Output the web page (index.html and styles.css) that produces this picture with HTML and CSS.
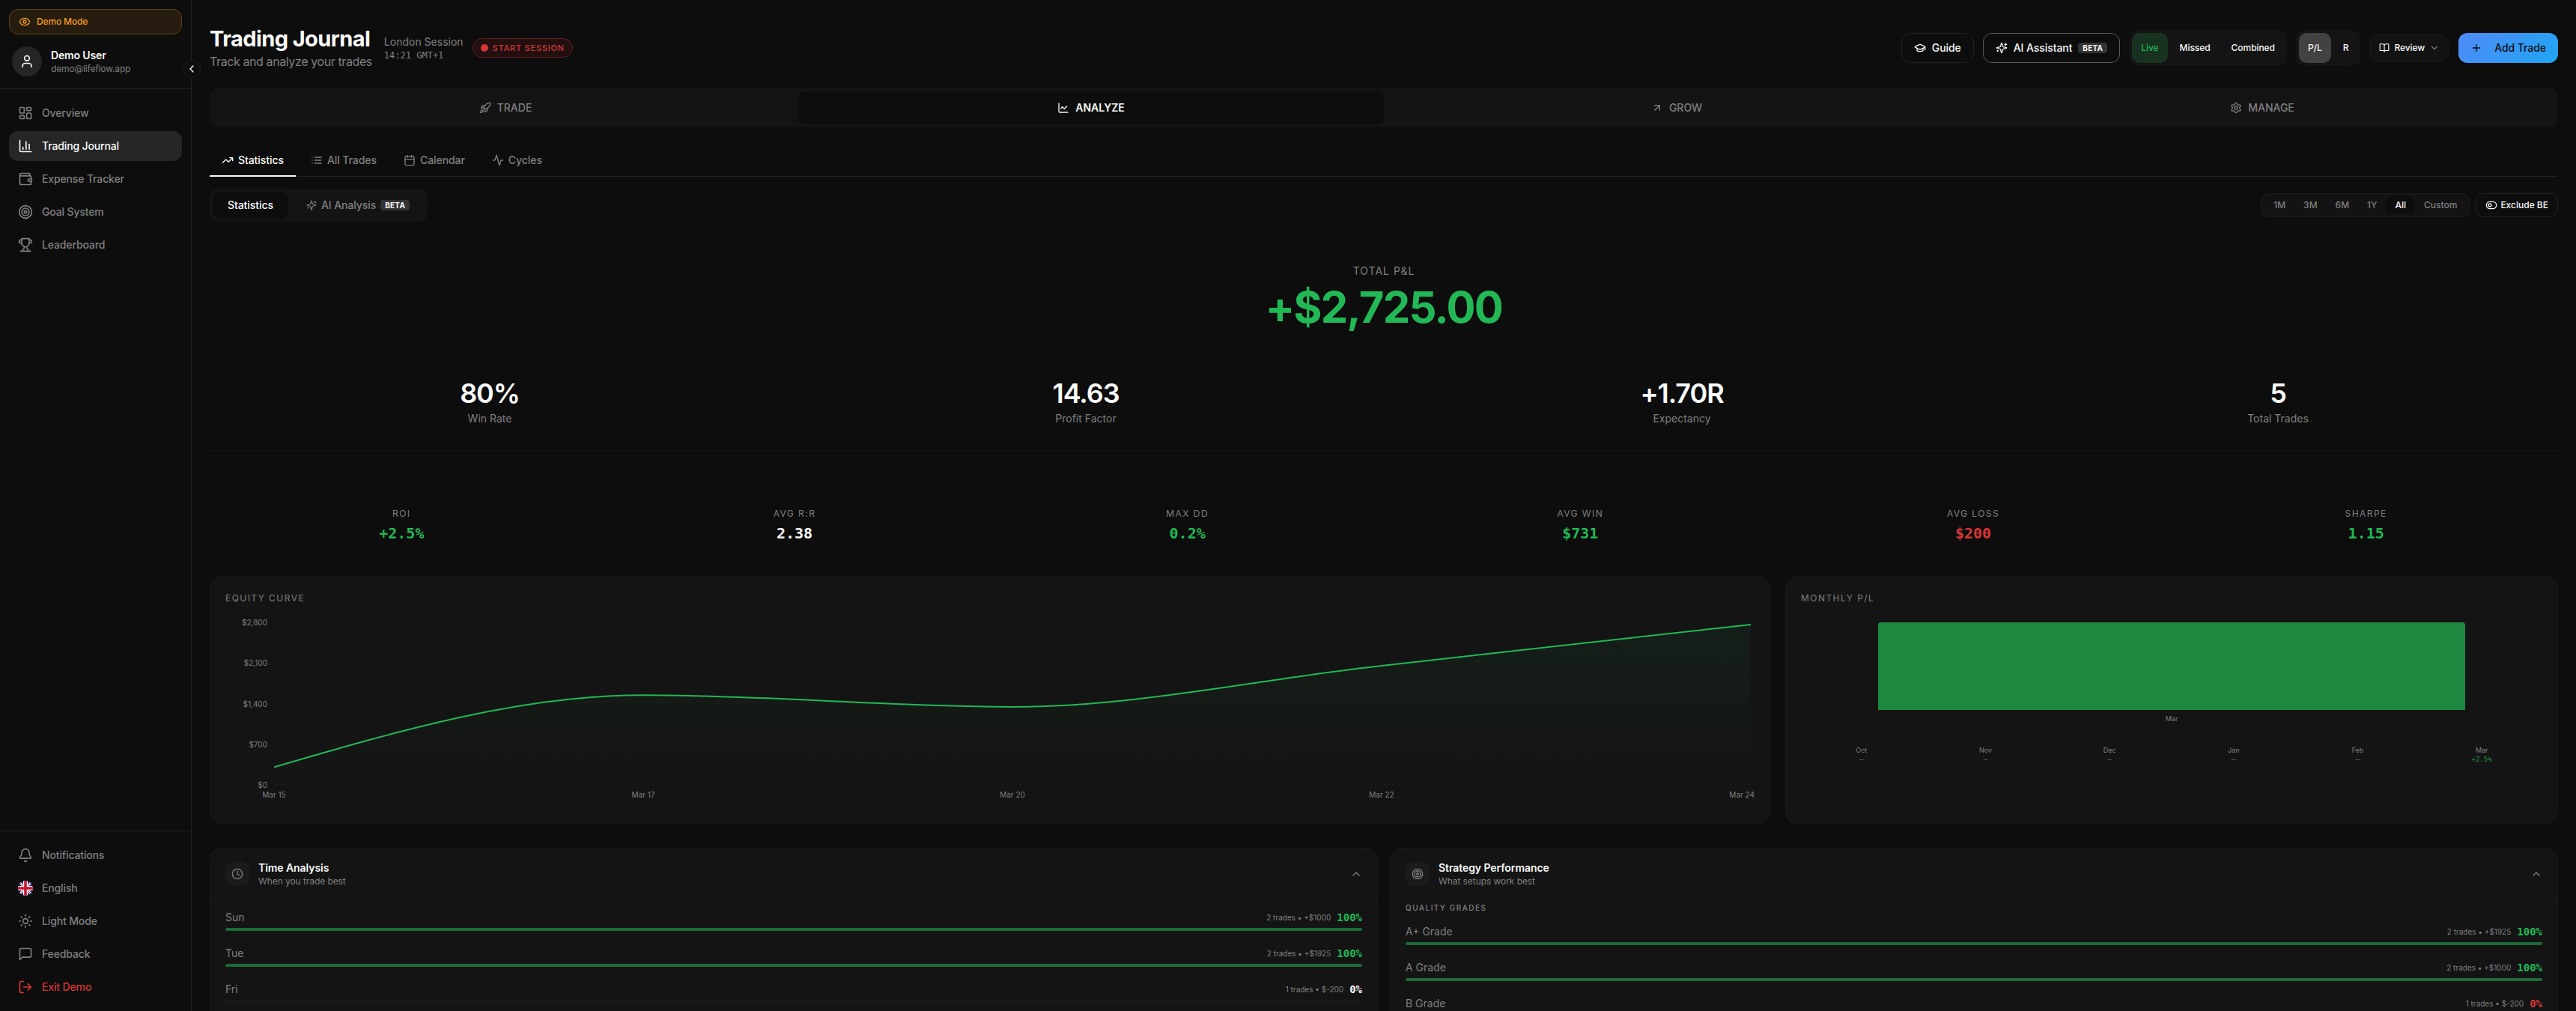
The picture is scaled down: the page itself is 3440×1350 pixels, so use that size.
FILE: index.html
```html
<!DOCTYPE html>
<html lang="en">
<head>
	<meta charset="UTF-8">
	<title>Trading Journal</title>
	<meta name="viewport" content="width=device-width,initial-scale=1">
	<link rel="stylesheet" href="styles.css">
</head>
<body>
	<svg class="sprite" aria-hidden="true">
		<symbol id="eye" viewBox="0 0 24 24"><path d="M2.062 12.348a1 1 0 0 1 0-.696 10.75 10.75 0 0 1 19.876 0 1 1 0 0 1 0 .696 10.75 10.75 0 0 1-19.876 0"/><circle cx="12" cy="12" r="3"/></symbol>
		<symbol id="user" viewBox="0 0 24 24"><path d="M19 21v-2a4 4 0 0 0-4-4H9a4 4 0 0 0-4 4v2"/><circle cx="12" cy="7" r="4"/></symbol>
		<symbol id="dashboard" viewBox="0 0 24 24"><rect width="7" height="9" x="3" y="3" rx="1"/><rect width="7" height="5" x="14" y="3" rx="1"/><rect width="7" height="9" x="14" y="12" rx="1"/><rect width="7" height="5" x="3" y="16" rx="1"/></symbol>
		<symbol id="columns" viewBox="0 0 24 24"><path d="M3 3v16a2 2 0 0 0 2 2h16M18 17V9M13 17V5M8 17v-3"/></symbol>
		<symbol id="wallet" viewBox="0 0 24 24"><path d="M19 7V4a1 1 0 0 0-1-1H5a2 2 0 0 0 0 4h15a1 1 0 0 1 1 1v4h-3a2 2 0 0 0 0 4h3a1 1 0 0 0 1-1v-2a1 1 0 0 0-1-1"/><path d="M3 5v14a2 2 0 0 0 2 2h15a1 1 0 0 0 1-1v-4"/></symbol>
		<symbol id="target" viewBox="0 0 24 24"><circle cx="12" cy="12" r="10"/><circle cx="12" cy="12" r="6"/><circle cx="12" cy="12" r="2"/></symbol>
		<symbol id="trophy" viewBox="0 0 24 24"><path d="M6 9H4.5a2.5 2.5 0 0 1 0-5H6M18 9h1.5a2.5 2.5 0 0 0 0-5H18M4 22h16M10 14.66V17c0 .55-.47.98-.97 1.21C7.85 18.75 7 20.24 7 22M14 14.66V17c0 .55.47.98.97 1.21C16.15 18.75 17 20.24 17 22M18 2H6v7a6 6 0 0 0 12 0V2Z"/></symbol>
		<symbol id="bell" viewBox="0 0 24 24"><path d="M10.268 21a2 2 0 0 0 3.464 0M3.262 15.326A1 1 0 0 0 4 17h16a1 1 0 0 0 .74-1.673C19.41 13.956 18 12.499 18 8A6 6 0 0 0 6 8c0 4.499-1.411 5.956-2.738 7.326"/></symbol>
		<symbol id="sun" viewBox="0 0 24 24"><circle cx="12" cy="12" r="4"/><path d="M12 2v2M12 20v2M4.93 4.93l1.41 1.41M17.66 17.66l1.41 1.41M2 12h2M20 12h2M6.34 17.66l-1.41 1.41M19.07 4.93l-1.41 1.41"/></symbol>
		<symbol id="message" viewBox="0 0 24 24"><path d="M21 15a2 2 0 0 1-2 2H7l-4 4V5a2 2 0 0 1 2-2h14a2 2 0 0 1 2 2z"/></symbol>
		<symbol id="logout" viewBox="0 0 24 24"><path d="m16 17 5-5-5-5M21 12H9M9 21H5a2 2 0 0 1-2-2V5a2 2 0 0 1 2-2h4"/></symbol>
		<symbol id="left" viewBox="0 0 24 24"><path d="m15 18-6-6 6-6"/></symbol>
		<symbol id="up" viewBox="0 0 24 24"><path d="m18 15-6-6-6 6"/></symbol>
		<symbol id="down" viewBox="0 0 24 24"><path d="m6 9 6 6 6-6"/></symbol>
		<symbol id="rocket" viewBox="0 0 24 24"><path d="M4.5 16.5c-1.5 1.26-2 5-2 5s3.74-.5 5-2c.71-.84.7-2.13-.09-2.91a2.18 2.18 0 0 0-2.91-.09zM12 15l-3-3a22 22 0 0 1 2-3.95A12.88 12.88 0 0 1 22 2c0 2.72-.78 7.5-6 11a22.35 22.35 0 0 1-4 2z"/><path d="M9 12H4s.55-3.03 2-4c1.62-1.08 5 0 5 0M12 15v5s3.03-.55 4-2c1.08-1.62 0-5 0-5"/></symbol>
		<symbol id="line" viewBox="0 0 24 24"><path d="M3 3v16a2 2 0 0 0 2 2h16M19 9l-5 5-4-4-3 3"/></symbol>
		<symbol id="arrow" viewBox="0 0 24 24"><path d="M7 7h10v10M7 17 17 7"/></symbol>
		<symbol id="gear" viewBox="0 0 24 24"><path d="M9.671 4.136a2.34 2.34 0 0 1 4.659 0 2.34 2.34 0 0 0 3.319 1.915 2.34 2.34 0 0 1 2.33 4.033 2.34 2.34 0 0 0 0 3.831 2.34 2.34 0 0 1-2.33 4.033 2.34 2.34 0 0 0-3.319 1.915 2.34 2.34 0 0 1-4.659 0 2.34 2.34 0 0 0-3.32-1.915 2.34 2.34 0 0 1-2.33-4.033 2.34 2.34 0 0 0 0-3.831A2.34 2.34 0 0 1 6.35 6.051a2.34 2.34 0 0 0 3.319-1.915"/><circle cx="12" cy="12" r="3"/></symbol>
		<symbol id="trend" viewBox="0 0 24 24"><path d="M16 7h6v6M22 7l-8.500 8.500-5-5L2 17"/></symbol>
		<symbol id="list" viewBox="0 0 24 24"><path d="M3 12h.01M3 18h.01M3 6h.01M8 12h13M8 18h13M8 6h13"/></symbol>
		<symbol id="calendar" viewBox="0 0 24 24"><path d="M8 2v4M16 2v4M3 10h18"/><rect width="18" height="18" x="3" y="4" rx="2"/></symbol>
		<symbol id="activity" viewBox="0 0 24 24"><path d="M22 12h-2.480a2 2 0 0 0-1.930 1.460l-2.350 8.360a.25.25 0 0 1-.48 0L9.240 2.180a.25.25 0 0 0-.48 0l-2.350 8.360A2 2 0 0 1 4.490 12H2"/></symbol>
		<symbol id="sparkles" viewBox="0 0 24 24"><path d="M9.937 15.5A2 2 0 0 0 8.5 14.063l-6.135-1.582a.5.5 0 0 1 0-.962L8.500 9.936A2 2 0 0 0 9.937 8.500l1.582-6.135a.5.5 0 0 1 .963 0L14.063 8.500A2 2 0 0 0 15.500 9.937l6.135 1.581a.5.5 0 0 1 0 .964L15.500 14.063a2 2 0 0 0-1.437 1.437l-1.582 6.135a.5.5 0 0 1-.963 0zM20 3v4M22 5h-4M4 17v2M5 18H3"/></symbol>
		<symbol id="cap" viewBox="0 0 24 24"><path d="M21.420 10.922a1 1 0 0 0-.019-1.838L12.830 5.180a2 2 0 0 0-1.660 0L2.600 9.080a1 1 0 0 0 0 1.832l8.570 3.908a2 2 0 0 0 1.660 0zM22 10v6M6 12.500V16a6 3 0 0 0 12 0v-3.500"/></symbol>
		<symbol id="book" viewBox="0 0 24 24"><path d="M12 7v14M3 18a1 1 0 0 1-1-1V4a1 1 0 0 1 1-1h5a4 4 0 0 1 4 4 4 4 0 0 1 4-4h5a1 1 0 0 1 1 1v13a1 1 0 0 1-1 1h-6a3 3 0 0 0-3 3 3 3 0 0 0-3-3z"/></symbol>
		<symbol id="plus" viewBox="0 0 24 24"><path d="M5 12h14M12 5v14"/></symbol>
		<symbol id="toggle" viewBox="0 0 24 24"><rect width="20" height="14" x="2" y="5" rx="7"/><circle cx="9" cy="12" r="3"/></symbol>
		<symbol id="clock" viewBox="0 0 24 24"><circle cx="12" cy="12" r="10"/><path d="M12 6v6l4 2"/></symbol>
	</svg>

	<div class="app">
		<aside class="sidebar">
			<div class="side-top">
				<div class="demo"><svg class="icon"><use href="#eye"/></svg>Demo Mode</div>
				<div class="user">
					<span class="avatar"><svg class="icon icon-lg"><use href="#user"/></svg></span>
					<div>
						<p class="user-name">Demo User</p>
						<p class="user-mail">demo@lifeflow.app</p>
					</div>
				</div>
				<button class="collapse" aria-label="Collapse sidebar"><svg class="icon"><use href="#left"/></svg></button>
			</div>
			<nav class="side-nav">
				<a href="#"><svg class="icon icon-lg"><use href="#dashboard"/></svg>Overview</a>
				<a href="#" class="active"><svg class="icon icon-lg"><use href="#columns"/></svg>Trading Journal</a>
				<a href="#"><svg class="icon icon-lg"><use href="#wallet"/></svg>Expense Tracker</a>
				<a href="#"><svg class="icon icon-lg"><use href="#target"/></svg>Goal System</a>
				<a href="#"><svg class="icon icon-lg"><use href="#trophy"/></svg>Leaderboard</a>
			</nav>
			<nav class="side-nav side-bottom">
				<a href="#"><svg class="icon icon-lg"><use href="#bell"/></svg>Notifications</a>
				<a href="#">
					<svg class="flag" viewBox="0 0 20 20">
						<clipPath id="round"><circle cx="10" cy="10" r="10"/></clipPath>
						<g clip-path="url(#round)">
							<rect width="20" height="20" fill="#012169"/>
							<path d="M0 0l20 20M20 0L0 20" stroke="#fff" stroke-width="3"/>
							<path d="M0 0l20 20M20 0L0 20" stroke="#c8102e" stroke-width="1"/>
							<path d="M10 0v20M0 10h20" stroke="#fff" stroke-width="6"/>
							<path d="M10 0v20M0 10h20" stroke="#c8102e" stroke-width="3.500"/>
						</g>
					</svg>English</a>
				<a href="#"><svg class="icon icon-lg"><use href="#sun"/></svg>Light Mode</a>
				<a href="#"><svg class="icon icon-lg"><use href="#message"/></svg>Feedback</a>
				<a href="#" class="exit"><svg class="icon icon-lg"><use href="#logout"/></svg>Exit Demo</a>
			</nav>
		</aside>

		<main class="main">
			<header class="header">
				<div>
					<h1>Trading Journal</h1>
					<p class="subtitle">Track and analyze your trades</p>
				</div>
				<div class="session">
					<div>
						<p class="session-name">London Session</p>
						<p class="session-time">14:21 GMT+1</p>
					</div>
					<button class="start"><i></i>START SESSION</button>
				</div>
				<div class="actions">
					<button class="btn"><svg class="icon"><use href="#cap"/></svg>Guide</button>
					<button class="btn btn-ai"><svg class="icon"><use href="#sparkles"/></svg>AI Assistant<span class="beta">BETA</span></button>
					<div class="switch">
						<button class="live">Live</button>
						<button>Missed</button>
						<button>Combined</button>
					</div>
					<div class="switch">
						<button class="active">P/L</button>
						<button>R</button>
					</div>
					<button class="review"><svg class="icon icon-sm"><use href="#book"/></svg>Review<svg class="icon icon-sm dim"><use href="#down"/></svg></button>
					<button class="add"><svg class="icon"><use href="#plus"/></svg>Add Trade</button>
				</div>
			</header>

			<nav class="modes">
				<button><svg class="icon"><use href="#rocket"/></svg>TRADE</button>
				<button class="active"><svg class="icon"><use href="#line"/></svg>ANALYZE</button>
				<button><svg class="icon"><use href="#arrow"/></svg>GROW</button>
				<button><svg class="icon"><use href="#gear"/></svg>MANAGE</button>
			</nav>

			<nav class="tabs">
				<button class="active"><svg class="icon"><use href="#trend"/></svg>Statistics</button>
				<button><svg class="icon"><use href="#list"/></svg>All Trades</button>
				<button><svg class="icon"><use href="#calendar"/></svg>Calendar</button>
				<button><svg class="icon"><use href="#activity"/></svg>Cycles</button>
			</nav>

			<div class="toolbar">
				<div class="segment">
					<button class="active">Statistics</button>
					<button><svg class="icon icon-sm"><use href="#sparkles"/></svg>AI Analysis<span class="beta">BETA</span></button>
				</div>
				<div class="filters">
					<div class="range">
						<button>1M</button>
						<button>3M</button>
						<button>6M</button>
						<button>1Y</button>
						<button class="active">All</button>
						<button>Custom</button>
					</div>
					<button class="exclude"><svg class="icon"><use href="#toggle"/></svg>Exclude BE</button>
				</div>
			</div>

			<section class="hero">
				<p class="hero-label">TOTAL P&amp;L</p>
				<p class="hero-value">+$2,725.00</p>
			</section>

			<section class="stats">
				<div><p class="stat-value">80%</p><p class="stat-label">Win Rate</p></div>
				<div><p class="stat-value">14.63</p><p class="stat-label">Profit Factor</p></div>
				<div><p class="stat-value">+1.70R</p><p class="stat-label">Expectancy</p></div>
				<div><p class="stat-value">5</p><p class="stat-label">Total Trades</p></div>
			</section>

			<section class="metrics">
				<div><p class="caps">ROI</p><p class="metric green">+2.5%</p></div>
				<div><p class="caps">AVG R:R</p><p class="metric">2.38</p></div>
				<div><p class="caps">MAX DD</p><p class="metric green">0.2%</p></div>
				<div><p class="caps">AVG WIN</p><p class="metric green">$731</p></div>
				<div><p class="caps">AVG LOSS</p><p class="metric red">$200</p></div>
				<div><p class="caps">SHARPE</p><p class="metric green">1.15</p></div>
			</section>

			<section class="charts">
				<div class="card equity">
					<h2 class="caps">EQUITY CURVE</h2>
					<div class="chart">
						<div class="y-axis"><span>$2,800</span><span>$2,100</span><span>$1,400</span><span>$700</span><span>$0</span></div>
						<svg class="plot" viewBox="0 0 1970 220" preserveAspectRatio="none">
							<defs>
								<linearGradient id="fade" x1="0" y1="0" x2="0" y2="1">
									<stop offset="0" stop-color="#22c55e" stop-opacity=".06"/>
									<stop offset="1" stop-color="#22c55e" stop-opacity="0"/>
								</linearGradient>
							</defs>
							<path class="grid" d="M0 .5H1970M0 55H1970M0 110H1970M0 165H1970M0 219.500H1970"/>
							<path fill="url(#fade)" d="M0 196.400C164.200 148.300 328.300 100.200 492.500 100.200C656.700 100.200 820.800 115.900 985 115.900C1149.200 115.900 1313.300 79.200 1477.500 60.900L1970 5.900V220H0Z"/>
							<path class="curve" d="M0 196.400C164.200 148.300 328.300 100.200 492.500 100.200C656.700 100.200 820.800 115.900 985 115.900C1149.200 115.900 1313.300 79.200 1477.500 60.900L1970 5.900"/>
						</svg>
						<div class="x-axis"><span>Mar 15</span><span>Mar 17</span><span>Mar 20</span><span>Mar 22</span><span>Mar 24</span></div>
					</div>
				</div>
				<div class="card">
					<h2 class="caps">MONTHLY P/L</h2>
					<div class="bars">
						<div class="bar"></div>
						<span>Mar</span>
					</div>
					<div class="months">
						<div>Oct<b>–</b></div>
						<div>Nov<b>–</b></div>
						<div>Dec<b>–</b></div>
						<div>Jan<b>–</b></div>
						<div>Feb<b>–</b></div>
						<div>Mar<b>+2.5%</b></div>
					</div>
				</div>
			</section>

			<section class="panels">
				<div class="panel">
					<button class="panel-head">
						<span class="panel-icon"><svg class="icon"><use href="#clock"/></svg></span>
						<span class="panel-title">Time Analysis<small>When you trade best</small></span>
						<svg class="icon"><use href="#up"/></svg>
					</button>
					<div class="panel-body">
						<div class="row"><span>Sun</span><em>2 trades • +$1000</em><strong class="green">100%</strong><div class="track"><div style="width:100%"></div></div></div>
						<div class="row"><span>Tue</span><em>2 trades • +$1925</em><strong class="green">100%</strong><div class="track"><div style="width:100%"></div></div></div>
						<div class="row"><span>Fri</span><em>1 trades • $-200</em><strong>0%</strong><div class="track"><div style="width:0%"></div></div></div>
					</div>
				</div>
				<div class="panel">
					<button class="panel-head">
						<span class="panel-icon"><svg class="icon"><use href="#target"/></svg></span>
						<span class="panel-title">Strategy Performance<small>What setups work best</small></span>
						<svg class="icon"><use href="#up"/></svg>
					</button>
					<h3 class="grades">QUALITY GRADES</h3>
					<div class="panel-body">
						<div class="row"><span>A+ Grade</span><em>2 trades • +$1925</em><strong class="green">100%</strong><div class="track"><div style="width:100%"></div></div></div>
						<div class="row"><span>A Grade</span><em>2 trades • +$1000</em><strong class="green">100%</strong><div class="track"><div style="width:100%"></div></div></div>
						<div class="row"><span>B Grade</span><em>1 trades • $-200</em><strong class="red">0%</strong><div class="track"><div style="width:0%"></div></div></div>
					</div>
				</div>
			</section>
		</main>
	</div>
</body>
</html>
```

FILE: styles.css
```css
*{
	box-sizing: border-box;
	margin: 0;
	padding: 0;
}
body{
	background: #0d0d0d;
	color: #fafafa;
	font-family: Inter, "Liberation Sans", sans-serif;
	font-size: 14px;
	line-height: 20px;
}
button{
	border: 0;
	background: none;
	color: inherit;
	font: inherit;
	font-weight: 500;
	letter-spacing: -.005em;
	display: flex;
	align-items: center;
	cursor: pointer;
}
a{
	color: inherit;
	text-decoration: none;
}
.sprite{
	display: none;
}
.icon{
	width: 16px;
	height: 16px;
	flex: none;
	fill: none;
	stroke: currentColor;
	stroke-width: 2;
	stroke-linecap: round;
	stroke-linejoin: round;
}
.icon-lg{
	width: 20px;
	height: 20px;
}
.icon-sm{
	width: 14px;
	height: 14px;
}
.green{
	color: #22b856;
}
.red{
	color: #d93636;
}
.dim{
	color: #808080;
}

.app{
	display: flex;
	height: 100vh;
	overflow: hidden;
}

/* sidebar */
.sidebar{
	width: 256px;
	flex: none;
	display: flex;
	flex-direction: column;
	border-right: 1px solid #212121;
	letter-spacing: -.01em;
}
.side-top{
	position: relative;
	padding: 12px 12px 16px;
	border-bottom: 1px solid #212121;
}
.demo{
	display: flex;
	align-items: center;
	gap: 8px;
	padding: 8px 12px;
	border: 1px solid #62430f;
	border-radius: 12px;
	background: #261c10;
	color: #f59e1b;
	font-size: 12px;
	font-weight: 500;
	line-height: 16px;
}
.user{
	display: flex;
	align-items: center;
	gap: 12px;
	padding: 16px 4px 0;
}
.avatar{
	width: 40px;
	height: 40px;
	border-radius: 50%;
	background: #262626;
	display: flex;
	align-items: center;
	justify-content: center;
}
.user-name{
	font-weight: 600;
}
.user-mail{
	color: #808080;
	font-size: 12px;
	line-height: 16px;
}
.collapse{
	position: absolute;
	right: -13px;
	top: 80px;
	width: 24px;
	height: 24px;
	justify-content: center;
	border: 1px solid #212121;
	border-radius: 50%;
	background: #0d0d0d;
}
.side-nav{
	display: flex;
	flex-direction: column;
	gap: 4px;
	padding: 12px;
	color: #808080;
	font-weight: 500;
}
.side-nav a{
	display: flex;
	align-items: center;
	gap: 12px;
	padding: 10px 12px;
	border-radius: 12px;
}
.side-nav .active{
	background: #262626;
	color: #fafafa;
}
.side-nav .exit{
	color: #d93636;
}
.side-bottom{
	margin-top: auto;
	border-top: 1px solid #212121;
}
.flag{
	width: 20px;
	height: 20px;
}

/* header */
.main{
	flex: 1;
	min-width: 0;
	padding: 34px 24px 24px;
	overflow: hidden;
}
.header{
	display: flex;
	align-items: center;
	gap: 16px;
	height: 60px;
	margin-bottom: 24px;
}
h1{
	font-size: 29px;
	font-weight: 700;
	line-height: 36px;
	letter-spacing: -.02em;
}
.subtitle{
	color: #808080;
	font-size: 16px;
	line-height: 24px;
	letter-spacing: -.025em;
}
.session{
	display: flex;
	align-items: center;
	gap: 12px;
	color: #808080;
}
.session-time{
	font-family: "DejaVu Sans Mono", monospace;
	font-size: 12px;
	line-height: 16px;
}
.start{
	gap: 6px;
	padding: 4px 10px;
	border: 1px solid #5f1e1e;
	border-radius: 13px;
	background: #221010;
	color: #d93636;
	font-size: 11px;
	font-weight: 500;
	line-height: 16px;
	letter-spacing: .07em;
}
.start i{
	width: 10px;
	height: 10px;
	border-radius: 50%;
	background: #d93636;
}
.actions{
	display: flex;
	align-items: center;
	gap: 12px;
	margin-left: auto;
}
.btn{
	gap: 8px;
	height: 40px;
	padding: 0 16px;
	border: 1px solid #212121;
	border-radius: 12px;
}
.btn-ai{
	border-color: #5c5c5c;
}
.beta{
	padding: 0 6px;
	border-radius: 4px;
	background: #333;
	color: #fafafa;
	font-size: 10px;
	font-weight: 700;
	line-height: 14px;
	letter-spacing: .025em;
}
.switch{
	display: flex;
	gap: 4px;
	padding: 4px;
	border-radius: 12px;
	background: #141414;
}
.switch button{
	height: 40px;
	padding: 0 12px;
	border-radius: 10px;
	font-size: 12px;
}
.switch .live{
	background: #17321f;
	color: #22b856;
}
.switch .active{
	background: #424242;
}
.review{
	gap: 6px;
	height: 36px;
	padding: 0 12px;
	border: 1px solid #1b1b1b;
	border-radius: 12px;
	background: #121212;
	font-size: 12px;
}
.add{
	gap: 16px;
	height: 40px;
	padding: 0 16px;
	border-radius: 12px;
	background: linear-gradient(135deg, #4f8af8, #20a6f2);
	color: #0d0d0d;
}

/* navigation rows */
.modes{
	display: grid;
	grid-template-columns: repeat(4, 1fr);
	padding: 4px;
	border-radius: 10px;
	background: #141414;
}
.modes button{
	height: 44px;
	justify-content: center;
	gap: 8px;
	border-radius: 8px;
	color: #808080;
	letter-spacing: 0;
}
.modes .active{
	background: #0d0d0d;
	color: #fafafa;
	font-weight: 600;
}
.tabs{
	display: flex;
	gap: 4px;
	margin: 24px 0 16px;
	box-shadow: inset 0 -1px #212121;
}
.tabs button{
	gap: 6px;
	padding: 10px 16px;
	border-bottom: 2px solid transparent;
	color: #808080;
}
.tabs .active{
	border-color: #fafafa;
	color: #fafafa;
}
.toolbar,
.filters{
	display: flex;
	align-items: center;
	justify-content: space-between;
	gap: 8px;
}
.segment{
	display: flex;
	gap: 4px;
	padding: 4px;
	border-radius: 12px;
	background: #141414;
}
.segment button{
	gap: 6px;
	height: 36px;
	padding: 0 20px;
	border-radius: 10px;
	color: #808080;
}
.segment .active{
	background: #0d0d0d;
	color: #fafafa;
}
.range{
	display: flex;
	padding: 3px 4px;
	border: 1px solid #1b1b1b;
	border-radius: 10px;
	background: #131313;
	color: #808080;
}
.range button{
	height: 24px;
	padding: 0 12px;
	border-radius: 8px;
	font-size: 12px;
	letter-spacing: 0;
}
.range .active{
	background: #0d0d0d;
	color: #fafafa;
}
.exclude{
	gap: 4px;
	height: 32px;
	padding: 0 12px;
	border: 1px solid #212121;
	border-radius: 10px;
	font-size: 12px;
	letter-spacing: 0;
}

/* numbers */
.hero{
	padding: 56px 0 32px;
	text-align: center;
}
.hero-label{
	margin-bottom: 8px;
	color: #808080;
	letter-spacing: 1px;
}
.hero-value{
	color: #22b856;
	font-size: 58px;
	font-weight: 700;
	line-height: 60px;
	letter-spacing: -.03em;
}
.stats{
	display: grid;
	grid-template-columns: repeat(4, 1fr);
	gap: 48px;
	padding: 32px 0;
	border: solid #151515;
	border-width: 1px 0;
	text-align: center;
}
.stat-value{
	margin-bottom: 4px;
	font-size: 36px;
	font-weight: 600;
	line-height: 40px;
	letter-spacing: -.03em;
}
.stat-label{
	color: #808080;
}
.metrics{
	display: grid;
	grid-template-columns: repeat(6, 1fr);
	gap: 12px;
	padding: 76px 0 44px;
	text-align: center;
}
.caps{
	color: #808080;
	font-size: 12px;
	font-weight: 400;
	line-height: 16px;
	letter-spacing: .12em;
}
.metric{
	margin-top: 4px;
	font-family: "DejaVu Sans Mono", monospace;
	font-size: 20px;
	font-weight: 700;
	line-height: 28px;
}

/* charts */
.charts{
	display: grid;
	grid-template-columns: repeat(3, 1fr);
	gap: 20px;
	margin-bottom: 32px;
}
.card,
.panel{
	border: 1px solid #1a1a1a;
	border-radius: 16px;
	background: #141414;
}
.card{
	padding: 20px;
	color: #808080;
}
.equity{
	grid-column: span 2;
}
.chart{
	display: grid;
	grid-template-columns: 56px 1fr 5px;
	padding: 21px 0 12px;
	font-size: 10px;
	line-height: 12px;
}
.y-axis{
	display: flex;
	flex-direction: column;
	justify-content: space-between;
	align-items: flex-end;
	margin: -3px 0 -6px;
}
.plot{
	width: 100%;
	height: 220px;
	padding-left: 9px;
	overflow: visible;
}
.plot .grid{
	fill: none;
	stroke: #1c1c1c;
	stroke-dasharray: 3 3;
	vector-effect: non-scaling-stroke;
}
.plot .curve{
	fill: none;
	stroke: #22b856;
	stroke-width: 2;
	vector-effect: non-scaling-stroke;
}
.x-axis{
	grid-column: 2 / 4;
	display: grid;
	grid-template-columns: repeat(4, 1fr) 5px;
	padding: 7px 0 0 9px;
}
.x-axis span{
	display: flex;
	justify-content: center;
	width: 0;
	white-space: nowrap;
}
.x-axis span:last-child{
	width: auto;
	justify-content: flex-end;
}
.bars{
	padding: 24px 5px 0;
	text-align: center;
	font-size: 9px;
	line-height: 12px;
}
.bar{
	width: 80%;
	height: 117px;
	margin: 0 auto 6px;
	border-radius: 4px 4px 0 0;
	background: #1f8840;
}
.months{
	display: grid;
	grid-template-columns: repeat(6, 1fr);
	gap: 4px;
	margin-top: 30px;
	text-align: center;
	font-size: 9px;
	line-height: 12px;
}
.months b{
	display: block;
	color: #1f9a4a;
	font-family: "DejaVu Sans Mono", monospace;
	font-weight: 400;
}

/* analysis panels */
.panels{
	display: grid;
	grid-template-columns: repeat(2, 1fr);
	gap: 16px;
}
.panel-head{
	width: 100%;
	gap: 12px;
	padding: 16px 20px 15px;
	border-bottom: 1px solid #191919;
	color: #808080;
	text-align: left;
}
.panel-icon{
	width: 32px;
	height: 32px;
	border-radius: 10px;
	background: #1b1b1b;
	display: flex;
	align-items: center;
	justify-content: center;
}
.panel-title{
	flex: 1;
	color: #fafafa;
	font-weight: 600;
}
.panel-title small{
	display: block;
	color: #808080;
	font-size: 12px;
	font-weight: 400;
	line-height: 16px;
}
.grades{
	padding: 4px 20px 0;
	color: #808080;
	font-size: 10px;
	font-weight: 500;
	line-height: 15px;
	letter-spacing: .15em;
}
.panel-body{
	display: grid;
	gap: 20px;
	padding: 14px 20px 20px;
}
.row{
	display: grid;
	grid-template-columns: 1fr auto auto;
	gap: 4px 8px;
	align-items: center;
	color: #808080;
}
.row em{
	font-size: 10px;
	font-style: normal;
}
.row strong{
	font-family: "DejaVu Sans Mono", monospace;
}
.row strong:not([class]){
	color: #fafafa;
}
.row .green{
	color: #22b856;
}
.row .red{
	color: #d93636;
}
.track{
	grid-column: 1 / -1;
	height: 4px;
	border-radius: 2px;
	background: #191919;
}
.track div{
	height: 4px;
	border-radius: 2px;
	background: #1d6b37;
}
```
